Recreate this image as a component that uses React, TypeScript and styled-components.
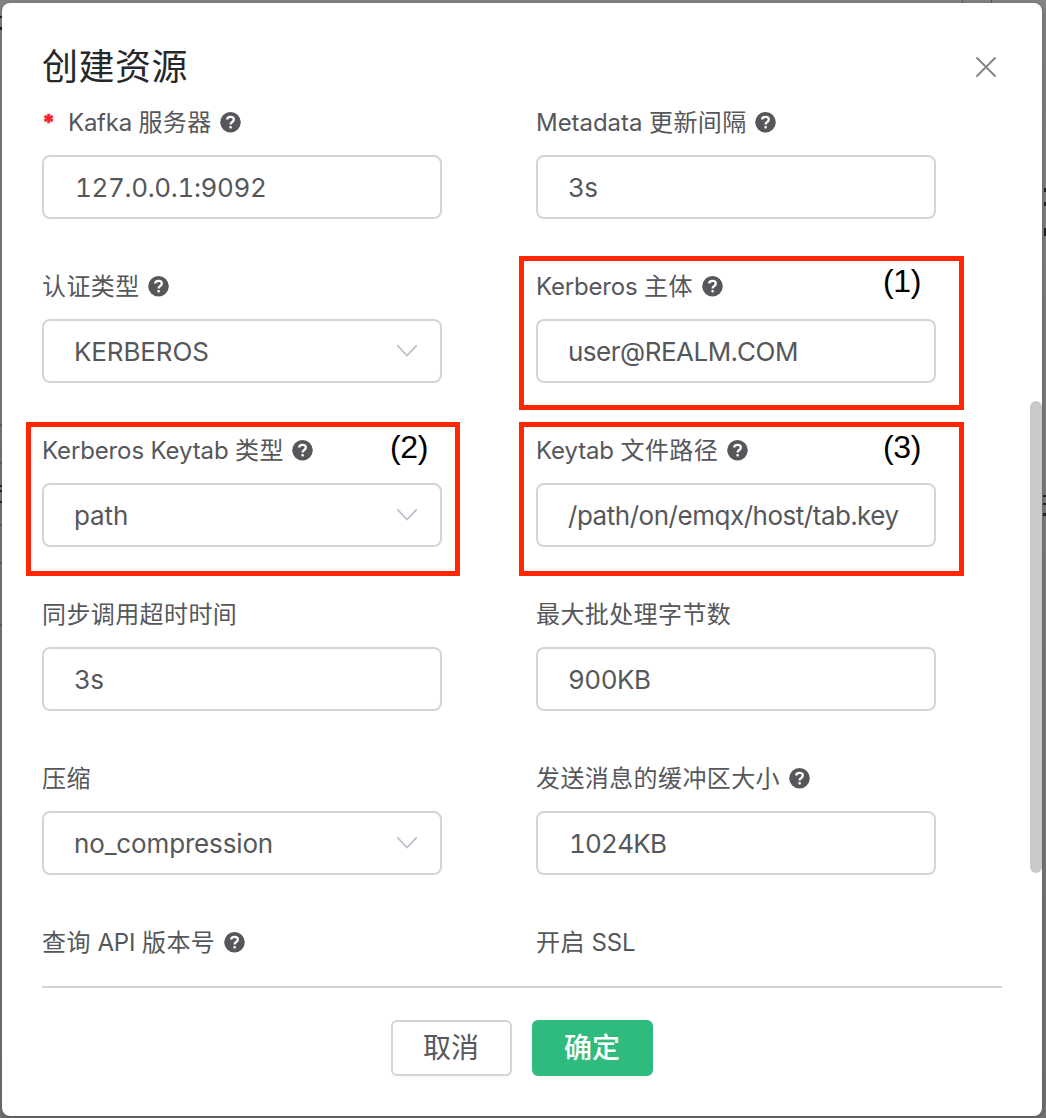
import React from 'react';
import styled, { createGlobalStyle } from 'styled-components';

const GlobalStyle = createGlobalStyle`
  * { box-sizing: border-box; }
  body {
    margin: 0;
    background: #7f7f7f;
    font-family: Inter, 'Noto Sans CJK SC', sans-serif;
    color: #56575b;
  }
`;

const speck = (x: number, y: number, w: number, h: number, color = '#252525') =>
  `linear-gradient(${color}, ${color}) ${x}px ${y}px / ${w}px ${h}px no-repeat`;

// Slivers of the page that stay visible around the dialog.
const pageEdges = [
  speck(0, 16, 2, 2),
  speck(0, 27, 2, 3),
  speck(0, 485, 2, 2),
  speck(0, 490, 2, 2),
  speck(0, 501, 2, 2),
  ...[424, 462, 524, 562, 624].map((y) => speck(0, y, 2, 2, '#606060')),
  speck(962, 0, 1, 3, '#606060'),
  speck(991, 0, 1, 3, '#505050'),
  speck(1044, 188, 2, 4),
  speck(1044, 202, 2, 4),
  speck(1044, 228, 2, 8),
  speck(1043, 495, 3, 2),
  speck(1043, 503, 3, 2),
  speck(1043, 513, 3, 3),
].join(', ');

const Page = styled.div`
  width: 1046px;
  height: 1118px;
  padding: 3px 4px 2px 2px;
  overflow: hidden;
  background: ${pageEdges}, linear-gradient(#848484, #7b7b7b 60%, #747474);
`;

const Dialog = styled.section`
  display: flex;
  flex-direction: column;
  height: 1113px;
  border-radius: 8px;
  background: #fff;
  box-shadow: 0 2px 6px rgba(0, 0, 0, 0.3);
`;

const Header = styled.header`
  display: flex;
  align-items: center;
  justify-content: space-between;
  height: 98px;
  padding: 30px 45px 0 40px;
`;

const Title = styled.h1`
  margin: 0;
  font-size: 36px;
  line-height: 66px;
  font-weight: 400;
  letter-spacing: 0.5px;
  color: #26282a;
`;

const CloseButton = styled.button`
  display: flex;
  padding: 0;
  border: 0;
  background: none;
`;

const Body = styled.div`
  display: flex;
  justify-content: space-between;
  height: 887px;
  padding-left: 40px;
`;

const FormGrid = styled.div`
  display: grid;
  grid-template-columns: 400px 400px;
  column-gap: 94px;
  grid-auto-rows: 164px;
  width: 960px;
  border-bottom: 2px solid #d5d5d5;
`;

const ScrollTrack = styled.div`
  display: flex;
  flex-direction: column;
  width: 12px;
  padding-top: 300px;
`;

const ScrollThumb = styled.div`
  height: 472px;
  border-radius: 6px;
  background: #c9c9c9;
`;

const Field = styled.div<{ $short?: boolean }>`
  position: relative;
  display: flex;
  flex-direction: column;
  gap: 12px;
  height: ${(p) => (p.$short ? 42 : 164)}px;
`;

const Label = styled.div`
  display: flex;
  align-items: center;
  height: 42px;
  font-size: 24px;
  line-height: 40px;
  white-space: pre;

  svg { margin-left: 8.6px; flex: none; }
`;

const LabelText = styled.span<{ $track: number }>`
  padding-top: 2px;
  letter-spacing: ${(p) => p.$track}px;
`;

const Required = styled.span`
  width: 26px;
  color: #f5222d;
  font-weight: 900;
  font-size: 22px;
  -webkit-text-stroke: 0.5px #f5222d;
`;

const Control = styled.div<{ $track: number }>`
  display: flex;
  align-items: center;
  justify-content: space-between;
  height: 64px;
  padding: 2px 23px 0 30px;
  border: 2px solid #d5d5d5;
  border-radius: 8px;
  font-size: 26px;
  line-height: 40px;
  font-variant-numeric: tabular-nums;
  letter-spacing: ${(p) => p.$track}px;
  white-space: nowrap;

  svg { margin-bottom: 2px; }
`;

const Value = styled.span<{ $indent: number }>`
  padding-left: ${(p) => p.$indent}px;
`;

const Highlight = styled.div<{ $side: 'left' | 'right'; $top: number }>`
  position: absolute;
  top: ${(p) => p.$top}px;
  left: ${(p) => (p.$side === 'left' ? -16 : -17)}px;
  width: ${(p) => (p.$side === 'left' ? 434 : 445)}px;
  height: 154px;
  padding: 1px ${(p) => (p.$side === 'left' ? 27 : 38)}px 0 0;
  border: 5px solid #ff2600;
  font-family: 'Liberation Sans', Arial, sans-serif;
  font-size: 32px;
  line-height: 38px;
  text-align: right;
  letter-spacing: -0.4px;
  color: #000;
`;

const Footer = styled.footer`
  display: flex;
  justify-content: center;
  gap: 20px;
  padding-top: 32px;
`;

const Button = styled.button<{ $primary?: boolean }>`
  width: 121px;
  height: 56px;
  padding: 1px 1px 0 0;
  border: 2px solid ${(p) => (p.$primary ? '#30bb7e' : '#d5d5d5')};
  border-radius: 6px;
  background: ${(p) => (p.$primary ? '#30bb7e' : '#fff')};
  color: ${(p) => (p.$primary ? '#fff' : '#56575b')};
  font: ${(p) => (p.$primary ? 500 : 400)} 28px/51px Inter, 'Noto Sans CJK SC', sans-serif;
  box-shadow: 0 4px 0 rgba(0, 0, 0, 0.016);
`;

const HelpIcon = () => (
  <svg width="21" height="21" viewBox="0 0 21 21" fill="none">
    <circle cx="10.5" cy="10.3" r="10.3" fill="#56575b" />
    <path d="M7.2 7.6C7.2 5.8 8.5 4.8 10.5 4.8C12.6 4.8 13.8 5.9 13.8 7.4C13.8 8.8 13.1 9.4 12.2 10C11.1 10.7 10.6 11.2 10.6 12.6" stroke="#fff" strokeWidth="2.3" />
    <rect x="9.4" y="14.1" width="2.4" height="2.4" rx="0.7" fill="#fff" />
  </svg>
);

const ChevronIcon = () => (
  <svg width="20" height="12" viewBox="0 0 20 12" fill="none">
    <path d="M0.8 0.8L10 10.6L19.2 0.8" stroke="#bbbfc8" strokeWidth="1.7" strokeLinecap="round" />
  </svg>
);

const CloseIcon = () => (
  <svg width="22" height="22" viewBox="0 0 22 22" fill="none">
    <path d="M2 2L20 20M20 2L2 20" stroke="#808286" strokeWidth="1.8" strokeLinecap="round" />
  </svg>
);

interface FieldSpec {
  label: string;
  latinTrack?: number;
  value?: string;
  valueTrack?: number;
  valueIndent?: number;
  help?: boolean;
  required?: boolean;
  select?: boolean;
  mark?: { text: string; side: 'left' | 'right'; top: number };
}

const fields: FieldSpec[] = [
  { label: 'Kafka 服务器', latinTrack: -0.25, value: '127.0.0.1:9092', valueTrack: -0.35, valueIndent: 1, help: true, required: true },
  { label: 'Metadata 更新间隔', latinTrack: -0.05, value: '3s', valueTrack: -0.5, help: true },
  { label: '认证类型', value: 'KERBEROS', valueTrack: -0.12, help: true, select: true },
  { label: 'Kerberos 主体', latinTrack: -0.18, value: 'user@REALM.COM', valueTrack: -0.5, help: true, mark: { text: '(1)', side: 'right', top: -9 } },
  { label: 'Kerberos Keytab 类型', value: 'path', valueTrack: -0.1, help: true, select: true, mark: { text: '(2)', side: 'left', top: -7 } },
  { label: 'Keytab 文件路径', value: '/path/on/emqx/host/tab.key', valueTrack: -0.47, help: true, mark: { text: '(3)', side: 'right', top: -7 } },
  { label: '同步调用超时时间', value: '3s', valueTrack: -0.5 },
  { label: '最大批处理字节数', value: '900KB', valueTrack: -0.5 },
  { label: '压缩', value: 'no_compression', valueTrack: -0.15, select: true },
  { label: '发送消息的缓冲区大小', value: '1024KB', valueTrack: -0.8, valueIndent: 1, help: true },
  { label: '查询 API 版本号', help: true },
  { label: '开启 SSL' },
];

const FormField = ({
  label, latinTrack = -0.13, value, valueTrack = 0, valueIndent = 0, help, required, select, mark,
}: FieldSpec) => (
  <Field $short={!value}>
    <Label>
      {required && <Required>*</Required>}
      {label.split(/([A-Za-z ]+)/).filter(Boolean).map((part) => (
        <LabelText key={part} $track={/[A-Za-z]/.test(part) ? latinTrack : 0.4}>{part}</LabelText>
      ))}
      {help && <HelpIcon />}
    </Label>
    {value && (
      <Control $track={valueTrack}>
        <Value $indent={valueIndent}>{value}</Value>
        {select && <ChevronIcon />}
      </Control>
    )}
    {mark && <Highlight $side={mark.side} $top={mark.top}>{mark.text}</Highlight>}
  </Field>
);

export default function App() {
  return (
    <>
      <GlobalStyle />
      <Page>
        <Dialog>
          <Header>
            <Title>创建资源</Title>
            <CloseButton aria-label="关闭"><CloseIcon /></CloseButton>
          </Header>
          <Body>
            <FormGrid>
              {fields.map((f) => <FormField key={f.label} {...f} />)}
            </FormGrid>
            <ScrollTrack>
              <ScrollThumb />
            </ScrollTrack>
          </Body>
          <Footer>
            <Button>取消</Button>
            <Button $primary>确定</Button>
          </Footer>
        </Dialog>
      </Page>
    </>
  );
}
